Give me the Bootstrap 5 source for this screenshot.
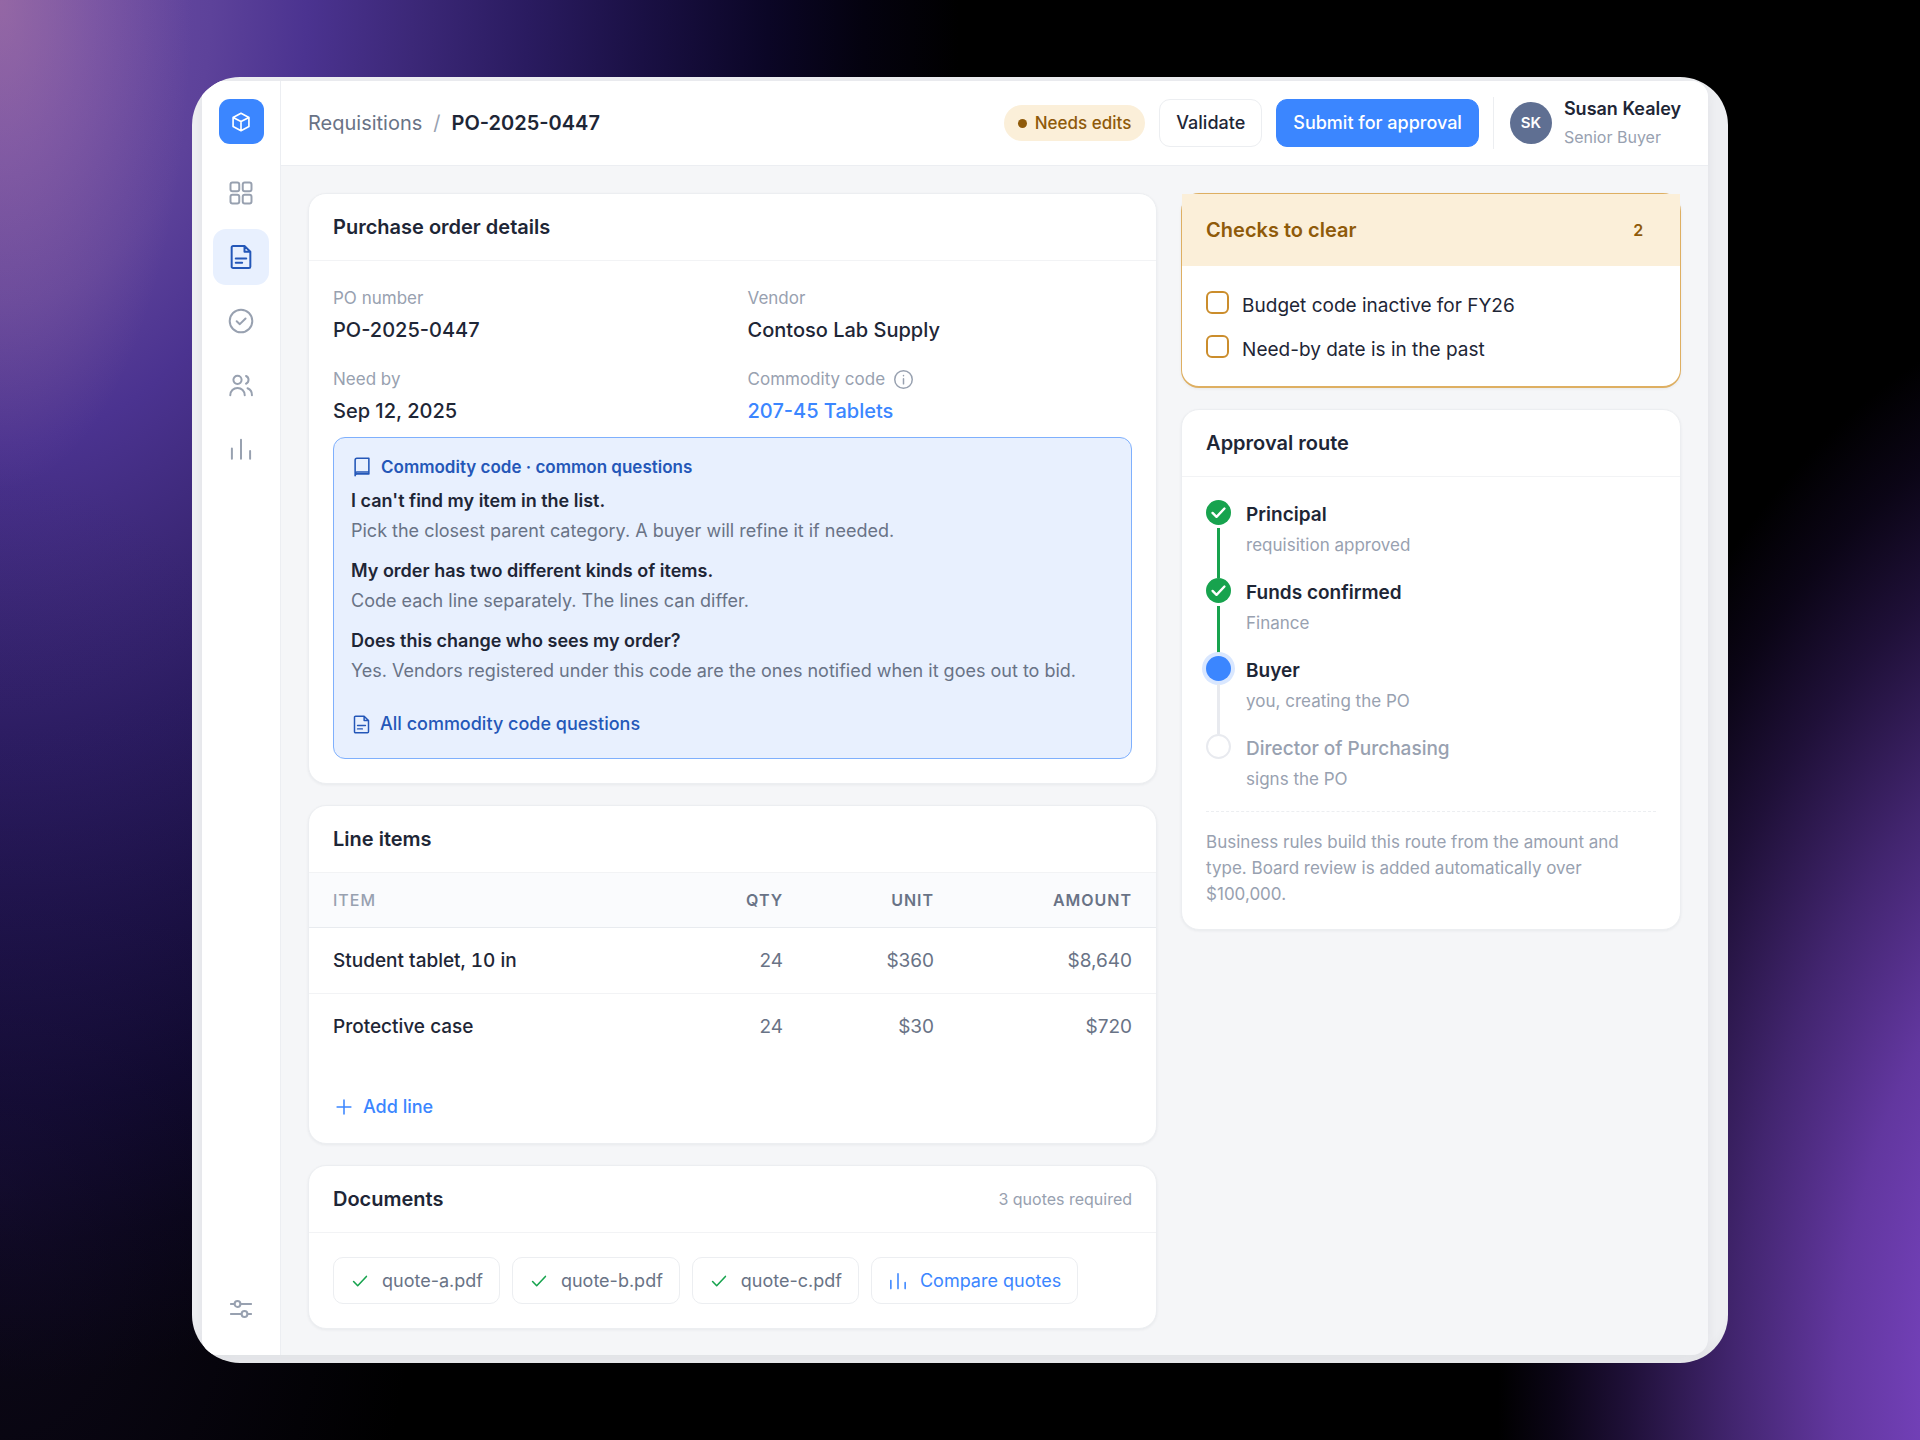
<!DOCTYPE html>
<html lang="en">
<head>
<meta charset="utf-8">
<meta name="viewport" content="width=device-width, initial-scale=1">
<title>PO-2025-0447 · Requisitions</title>
<link href="https://cdn.jsdelivr.net/npm/bootstrap@5.3.0/dist/css/bootstrap.min.css" rel="stylesheet">
<style>
  :root {
    --ink: #1e2636;
    --slate: #697386;
    --mute: #98a1b0;
    --line: #eceef1;
    --soft-line: #f2f3f5;
    --blue: #3b86ff;
    --navy: #2457b8;
    --amber: #8f5a0a;
    --amber-bg: #fbefd9;
    --amber-line: #deaf62;
    --green: #17a34e;
  }
  body {
    font-family: Inter, "Liberation Sans", sans-serif;
    font-size: 19px;
    line-height: 28px;
    color: var(--ink);
    background:
      radial-gradient(ellipse 10% 34% at 0% 0%, rgba(190, 130, 165, .42), rgba(190, 130, 165, 0) 100%),
      radial-gradient(ellipse 22% 50% at 0% 82%, rgba(46, 30, 92, .3), rgba(46, 30, 92, 0) 100%),
      radial-gradient(ellipse 50% 96% at 0% 0%, #7654a5 0%, #6a4ba3 10%, #5d429a 22%, #4b3390 32%, #3c2878 43%, #2a1b60 55%, #1a1044 67%, #0b0626 80%, #04020f 90%, rgba(0, 0, 0, 0) 100%),
      radial-gradient(ellipse 34% 78% at 112% 98%, #8347cc 0%, #7843c0 30%, #62379f 48%, #42256f 64%, #1f1038 80%, #0b0516 91%, rgba(0, 0, 0, 0) 100%),
      #000;
  }
  .stage { min-height: 100vh; padding: 77px 10%; }
  .bezel {
    background: #eeeff2;
    border-radius: 48px;
    padding: 4px 20px 8px 10px;
    overflow: hidden;
    flex: 1 1 auto;
    box-shadow: inset 0 -10px 10px -4px rgba(0, 0, 0, .03);
  }
  .app-shell { background: #f5f6f8; border-radius: 16px; box-shadow: 0 2px 12px rgba(20, 28, 46, .06); }
  .rail { width: 79px; flex: none; background: #fff; border-right: 1px solid #eceef2; padding: 18px 0; border-radius: 16px 0 0 16px; }
  .logo-tile { width: 45px; height: 45px; border-radius: 11px; background: var(--blue); margin-bottom: 13px; }
  .rail-link { width: 56px; height: 56px; border-radius: 13px; color: var(--mute); }
  .rail-link.active { background: #e8f0fe; color: var(--navy); }
  .topbar { background: #fff; border-bottom: 1px solid #eceef2; height: 85px; padding: 0 27px; border-radius: 0 16px 0 0; }
  .crumbs { font-size: 20px; gap: 11px; }
  .crumbs a { color: var(--slate); }
  .crumb-sep { color: var(--mute); }
  .tools { gap: 14px; }
  .status-pill { background: var(--amber-bg); color: var(--amber); font-size: 17px; font-weight: 500; padding: 4px 14px; border-radius: 18px; }
  .status-dot { width: 9px; height: 9px; border-radius: 50%; background: currentColor; }
  .act { font-size: 18px; font-weight: 500; line-height: 28px; padding: 9px 16px; border-radius: 11px; border: 1px solid var(--line); color: var(--ink); background: #fff; }
  .act-main { background: var(--blue); border-color: var(--blue); color: #fff; }
  .person { border-left: 1px solid var(--line); padding-left: 16px; gap: 12px; height: 52px; }
  .avatar { width: 42px; height: 42px; border-radius: 50%; background: #5f6f92; color: #fff; font-size: 15px; font-weight: 600; }
  .person-name { font-size: 18px; font-weight: 600; }
  .person-role { font-size: 16px; color: var(--mute); }
  .board { display: grid; grid-template-columns: minmax(0, 849fr) minmax(0, 500fr); gap: 24px; padding: 27px 27px 25px; align-items: start; }
  .stack { display: grid; gap: 21px; }
  .panel { background: #fff; border: 1px solid var(--line); border-radius: 18px; box-shadow: 0 1px 3px rgba(20, 28, 46, .06); }
  .panel-head { padding: 19px 24px; border-bottom: 1px solid var(--soft-line); }
  .panel-head h2 { font-size: 20px; font-weight: 600; line-height: 28px; margin: 0; }
  .facts { display: grid; grid-template-columns: 1fr 1fr; gap: 20px 30px; padding: 23px 24px 0; margin: 0; }
  .facts dt { font-size: 17px; font-weight: 400; color: var(--mute); line-height: 28px; }
  .facts dd { font-size: 20px; font-weight: 500; line-height: 30px; margin: 3px 0 0; }
  .facts a { color: var(--blue); }
  .help-box { margin: 11px 24px 24px; padding: 16px 17px 20px; border: 1px solid #7fb0fd; border-radius: 12px; background: #e8f0fe; font-size: 18px; }
  .help-box h3 { font-size: 17px; font-weight: 600; line-height: 26px; color: var(--navy); margin: 0 0 6px; }
  .help-box dt { font-weight: 600; line-height: 30px; }
  .help-box dd { color: var(--slate); line-height: 30px; margin: 0 0 10px; }
  .help-box a { color: var(--navy); font-weight: 500; padding-top: 14px; }
  .lines { width: 100%; table-layout: fixed; }
  .col-qty { width: 135px; }
  .col-unit { width: 151px; }
  .col-amount { width: 198px; }
  .lines th, .lines td { padding: 18px 24px; text-align: right; color: var(--slate); line-height: 29px; }
  .lines th:first-child, .lines td:first-child { text-align: left; }
  .lines thead th { font-size: 16px; font-weight: 600; line-height: 24px; padding: 15px 24px; letter-spacing: 1px; background: #fafbfd; border-bottom: 1px solid #e8ebef; }
  .lines thead th:first-child { color: var(--mute); font-weight: 500; }
  .lines td:first-child { color: var(--ink); font-weight: 500; font-variant-numeric: tabular-nums; }
  .lines tbody tr + tr td { border-top: 1px solid var(--soft-line); }
  .table-foot { padding: 34px 24px 22px; }
  .add-line { font-size: 18px; font-weight: 500; color: var(--blue); background: none; border: 0; padding: 0; }
  .head-note { font-size: 16px; color: var(--mute); line-height: 28px; }
  .chips { gap: 12px; }
  .chip { font-size: 18px; border: 1px solid var(--line); border-radius: 10px; background: #fff; color: var(--slate); padding: 8px 16px 8px 15px; line-height: 29px; gap: 11px; }
  .chip-blue { color: var(--blue); }
  .tick { color: var(--green); }
  .warn { border-color: var(--amber-line); border-width: 1px 1px 2px; }
  .warn-head { background: var(--amber-bg); color: var(--amber); padding: 22px 24px; }
  .warn-head h2 { font-size: 20px; font-weight: 600; line-height: 28px; margin: 0; }
  .count { font-size: 16px; font-weight: 600; padding: 0 13px; }
  .todo { padding: 25px 24px 21px; display: grid; gap: 14px; }
  .todo .form-check-input { width: 23px; height: 23px; margin: 0; border: 2px solid #cb8d2c; border-radius: 6px; float: none; }
  .todo label { gap: 13px; line-height: 30px; }
  .route { list-style: none; margin: 0; padding: 23px 24px 0; }
  .route li { display: grid; grid-template-columns: 25px 1fr; column-gap: 15px; min-height: 78px; }
  .route li:last-child { min-height: 0; }
  .track { display: flex; flex-direction: column; align-items: center; }
  .node { width: 25px; height: 25px; border-radius: 50%; flex: none; display: grid; place-items: center; }
  .node svg { stroke-width: 3; }
  .node-done { background: var(--green); color: #fff; }
  .node-now { background: var(--blue); box-shadow: 0 0 0 4px #d9e7ff; }
  .node-next { border: 2px solid #e8eaef; background: #fff; }
  .wire { width: 3px; background: #e8eaef; flex: 1; margin-top: 3px; }
  .wire-done { background: var(--green); }
  .step-name { font-size: 19px; font-weight: 600; line-height: 30px; }
  .step-note { font-size: 17px; color: var(--mute); line-height: 31px; }
  .is-next .step-name { color: var(--mute); font-weight: 500; }
  .rule-note { margin: 16px 24px 22px; padding-top: 17px; border-top: 1px dashed var(--line); font-size: 17px; line-height: 26px; color: var(--mute); }
  svg { fill: none; stroke: currentColor; stroke-width: 1.7; stroke-linecap: round; stroke-linejoin: round; flex: none; display: block; }
  .logo-tile svg { stroke-width: 2; }
  a { text-decoration: none; }
</style>
</head>
<body>
<div class="stage d-flex flex-column">
  <div class="bezel d-flex">
    <div class="app-shell d-flex flex-grow-1">
      <nav class="rail d-flex flex-column align-items-center gap-2" aria-label="Main">
        <a href="#" class="logo-tile d-flex align-items-center justify-content-center text-white" aria-label="Home">
          <svg width="20" height="20" viewBox="0 0 24 24"><path d="M12 1.500l9.500 5v11l-9.500 5-9.500-5v-11z M2.500 6.500l9.500 5 9.500-5M12 11.500v11"/></svg>
        </a>
        <a href="#" class="rail-link d-flex align-items-center justify-content-center" aria-label="Dashboard">
          <svg width="28" height="28" viewBox="0 0 24 24"><rect x="3" y="3" width="7.500" height="7.500" rx="1.700"/><rect x="13.500" y="3" width="7.500" height="7.500" rx="1.700"/><rect x="3" y="13.500" width="7.500" height="7.500" rx="1.700"/><rect x="13.500" y="13.500" width="7.500" height="7.500" rx="1.700"/></svg>
        </a>
        <a href="#" class="rail-link active d-flex align-items-center justify-content-center" aria-label="Requisitions">
          <svg width="28" height="28" viewBox="0 0 24 24"><path d="M15 2.500H5.200A1.200 1.200 0 0 0 4 3.700v16.600a1.200 1.200 0 0 0 1.200 1.200h13.600a1.200 1.200 0 0 0 1.200-1.200V7.500z M15 2.500v5h5M7.500 13.200h9M7.500 17h5.500"/></svg>
        </a>
        <a href="#" class="rail-link d-flex align-items-center justify-content-center" aria-label="Approvals">
          <svg width="28" height="28" viewBox="0 0 24 24"><circle cx="12" cy="12" r="9.700"/><path d="M8.300 12.200l2.700 2.500 4.900-4.900"/></svg>
        </a>
        <a href="#" class="rail-link d-flex align-items-center justify-content-center" aria-label="Vendors">
          <svg width="28" height="28" viewBox="0 0 24 24"><circle cx="9" cy="7.600" r="3.500"/><path d="M2.800 20.700a6.200 6.200 0 0 1 12.400 0M16.300 4.300a3.600 3.600 0 0 1 0 6.600M17.600 14.800a6.300 6.300 0 0 1 3.800 5.900"/></svg>
        </a>
        <a href="#" class="rail-link d-flex align-items-center justify-content-center" aria-label="Reports">
          <svg width="28" height="28" viewBox="0 0 24 24"><path d="M4.200 11.500v8.800M12 4v16.300M19.800 13.700v6.600"/></svg>
        </a>
        <a href="#" class="rail-link d-flex align-items-center justify-content-center mt-auto" aria-label="Settings">
          <svg width="28" height="28" viewBox="0 0 24 24"><path d="M3.300 7.700h3.200M11.500 7.700h9.200M3.300 16.300h9.200M17.500 16.300h3.200"/><circle cx="9" cy="7.700" r="2.500"/><circle cx="15" cy="16.300" r="2.500"/></svg>
        </a>
      </nav>

      <div class="flex-grow-1">
        <header class="topbar d-flex align-items-center justify-content-between">
          <nav class="crumbs d-flex" aria-label="Breadcrumb">
            <a href="#">Requisitions</a>
            <span class="crumb-sep">/</span>
            <span class="fw-semibold">PO-2025-0447</span>
          </nav>
          <div class="tools d-flex align-items-center">
            <span class="status-pill d-flex align-items-center gap-2"><span class="status-dot"></span>Needs edits</span>
            <button type="button" class="act">Validate</button>
            <button type="button" class="act act-main">Submit for approval</button>
            <div class="person d-flex align-items-center">
              <span class="avatar d-flex align-items-center justify-content-center">SK</span>
              <div>
                <div class="person-name">Susan Kealey</div>
                <div class="person-role">Senior Buyer</div>
              </div>
            </div>
          </div>
        </header>

        <main class="board">
          <div class="stack">
            <section class="panel">
              <div class="panel-head"><h2>Purchase order details</h2></div>
              <dl class="facts">
                <div><dt>PO number</dt><dd>PO-2025-0447</dd></div>
                <div><dt>Vendor</dt><dd>Contoso Lab Supply</dd></div>
                <div><dt>Need by</dt><dd>Sep 12, 2025</dd></div>
                <div>
                  <dt class="d-flex align-items-center gap-2">Commodity code
                    <svg width="21" height="21" viewBox="0 0 24 24"><circle cx="12" cy="12" r="10"/><path d="M12 11v6M12 7.500v.1"/></svg>
                  </dt>
                  <dd><a href="#">207-45 Tablets</a></dd>
                </div>
              </dl>
              <div class="help-box">
                <h3 class="d-flex align-items-center gap-2">
                  <svg width="22" height="22" viewBox="0 0 24 24"><path d="M4.500 21.500V4.500a2 2 0 0 1 2-2h13v17H6.500a2 2 0 0 0-2 2M4.500 19.500a2 2 0 0 1 2-2h13"/></svg>
                  Commodity code · common questions
                </h3>
                <dl class="mb-0">
                  <dt>I can't find my item in the list.</dt>
                  <dd>Pick the closest parent category. A buyer will refine it if needed.</dd>
                  <dt>My order has two different kinds of items.</dt>
                  <dd>Code each line separately. The lines can differ.</dd>
                  <dt>Does this change who sees my order?</dt>
                  <dd>Yes. Vendors registered under this code are the ones notified when it goes out to bid.</dd>
                </dl>
                <a href="#" class="d-flex align-items-center">
                  <svg class="me-2" width="21" height="21" viewBox="0 0 24 24"><path d="M15 2.500H5.200A1.200 1.200 0 0 0 4 3.700v16.600a1.200 1.200 0 0 0 1.200 1.200h13.600a1.200 1.200 0 0 0 1.200-1.200V7.500z M15 2.500v5h5M7.500 13.200h9M7.500 17h5.500"/></svg>
                  All commodity code questions
                </a>
              </div>
            </section>

            <section class="panel">
              <div class="panel-head"><h2>Line items</h2></div>
              <table class="lines">
                <colgroup><col><col class="col-qty"><col class="col-unit"><col class="col-amount"></colgroup>
                <thead><tr><th scope="col">ITEM</th><th scope="col">QTY</th><th scope="col">UNIT</th><th scope="col">AMOUNT</th></tr></thead>
                <tbody>
                  <tr><td>Student tablet, 10 in</td><td>24</td><td>$360</td><td>$8,640</td></tr>
                  <tr><td>Protective case</td><td>24</td><td>$30</td><td>$720</td></tr>
                </tbody>
              </table>
              <div class="table-foot">
                <button type="button" class="add-line d-flex align-items-center gap-2">
                  <svg width="22" height="22" viewBox="0 0 24 24"><path d="M12 4.500v15M4.500 12h15"/></svg>Add line
                </button>
              </div>
            </section>

            <section class="panel">
              <div class="panel-head d-flex align-items-center justify-content-between">
                <h2>Documents</h2><span class="head-note">3 quotes required</span>
              </div>
              <div class="chips d-flex flex-wrap p-4">
                <button type="button" class="chip d-flex align-items-center"><svg class="tick" width="22" height="22" viewBox="0 0 24 24"><path d="M5 12.500l4.500 4.700L19 7"/></svg>quote-a.pdf</button>
                <button type="button" class="chip d-flex align-items-center"><svg class="tick" width="22" height="22" viewBox="0 0 24 24"><path d="M5 12.500l4.500 4.700L19 7"/></svg>quote-b.pdf</button>
                <button type="button" class="chip d-flex align-items-center"><svg class="tick" width="22" height="22" viewBox="0 0 24 24"><path d="M5 12.500l4.500 4.700L19 7"/></svg>quote-c.pdf</button>
                <button type="button" class="chip chip-blue d-flex align-items-center"><svg width="22" height="22" viewBox="0 0 24 24"><path d="M4.200 11.500v8.800M12 4v16.300M19.800 13.700v6.600"/></svg>Compare quotes</button>
              </div>
            </section>
          </div>

          <div class="stack">
            <section class="panel warn">
              <div class="warn-head d-flex align-items-center justify-content-between">
                <h2>Checks to clear</h2><span class="count">2</span>
              </div>
              <div class="todo">
                <label class="d-flex align-items-start"><input type="checkbox" class="form-check-input">Budget code inactive for FY26</label>
                <label class="d-flex align-items-start"><input type="checkbox" class="form-check-input">Need-by date is in the past</label>
              </div>
            </section>

            <section class="panel">
              <div class="panel-head"><h2>Approval route</h2></div>
              <ol class="route">
                <li><div class="track"><span class="node node-done"><svg width="19" height="19" viewBox="0 0 24 24"><path d="M4.500 12.500l5 5L19.500 7"/></svg></span><span class="wire wire-done"></span></div><div><div class="step-name">Principal</div><div class="step-note">requisition approved</div></div></li>
                <li><div class="track"><span class="node node-done"><svg width="19" height="19" viewBox="0 0 24 24"><path d="M4.500 12.500l5 5L19.500 7"/></svg></span><span class="wire wire-done"></span></div><div><div class="step-name">Funds confirmed</div><div class="step-note">Finance</div></div></li>
                <li><div class="track"><span class="node node-now"></span><span class="wire"></span></div><div><div class="step-name">Buyer</div><div class="step-note">you, creating the PO</div></div></li>
                <li class="is-next"><div class="track"><span class="node node-next"></span></div><div><div class="step-name">Director of Purchasing</div><div class="step-note">signs the PO</div></div></li>
              </ol>
              <p class="rule-note">Business rules build this route from the amount and type. Board review is added automatically over $100,000.</p>
            </section>
          </div>
        </main>
      </div>
    </div>
  </div>
</div>
<script src="https://cdn.jsdelivr.net/npm/bootstrap@5.3.0/dist/js/bootstrap.bundle.min.js"></script>
</body>
</html>
